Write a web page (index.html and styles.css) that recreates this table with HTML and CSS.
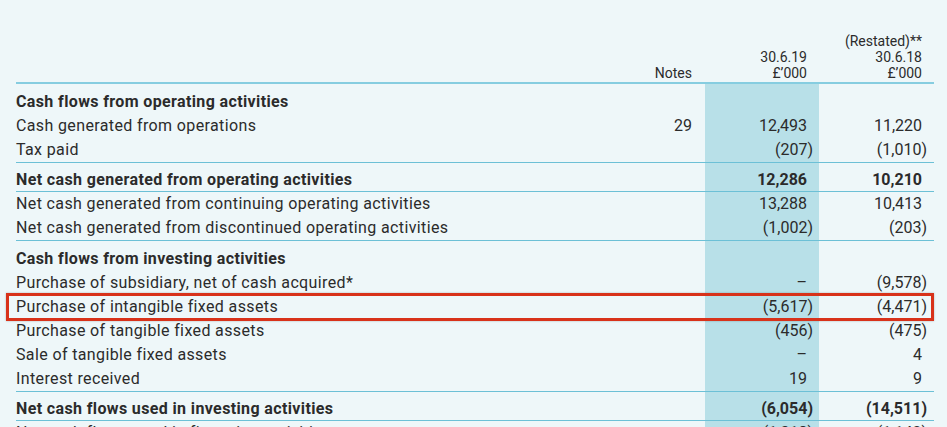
FILE: index.html
```
<!DOCTYPE html>
<html lang="en">
<head>
<meta charset="utf-8">
<title>Cash flow statement</title>
<link rel="stylesheet" href="styles.css">
</head>
<body>
<div class="sheet">
  <table class="cf">
    <colgroup>
      <col class="c-label">
      <col class="c-notes">
      <col class="c-cur">
      <col class="c-prev">
    </colgroup>
    <thead>
      <tr>
        <th class="lbl"></th>
        <th class="notes">Notes</th>
        <th class="cur">30.6.19<br>£’000</th>
        <th class="prev">(Restated)**<br>30.6.18<br>£’000</th>
      </tr>
    </thead>
    <tbody>
      <tr class="gap"><td class="lbl b">Cash flows from operating activities</td><td class="notes"></td><td class="cur"></td><td class="prev"></td></tr>
      <tr><td class="lbl">Cash generated from operations</td><td class="notes">29</td><td class="cur n">12,493</td><td class="prev n">11,220</td></tr>
      <tr class="rule"><td class="lbl">Tax paid</td><td class="notes"></td><td class="cur">(207)</td><td class="prev">(1,010)</td></tr>
      <tr class="gap rule total"><td class="lbl b">Net cash generated from operating activities</td><td class="notes"></td><td class="cur n b">12,286</td><td class="prev n b">10,210</td></tr>
      <tr><td class="lbl">Net cash generated from continuing operating activities</td><td class="notes"></td><td class="cur n">13,288</td><td class="prev n">10,413</td></tr>
      <tr class="rule"><td class="lbl">Net cash generated from discontinued operating activities</td><td class="notes"></td><td class="cur">(1,002)</td><td class="prev">(203)</td></tr>
      <tr class="gap"><td class="lbl b">Cash flows from investing activities</td><td class="notes"></td><td class="cur"></td><td class="prev"></td></tr>
      <tr><td class="lbl">Purchase of subsidiary, net of cash acquired*</td><td class="notes"></td><td class="cur n">–</td><td class="prev">(9,578)</td></tr>
      <tr><td class="lbl">Purchase of intangible fixed assets</td><td class="notes"></td><td class="cur">(5,617)</td><td class="prev">(4,471)</td></tr>
      <tr><td class="lbl">Purchase of tangible fixed assets</td><td class="notes"></td><td class="cur">(456)</td><td class="prev">(475)</td></tr>
      <tr><td class="lbl">Sale of tangible fixed assets</td><td class="notes"></td><td class="cur n">–</td><td class="prev n">4</td></tr>
      <tr class="rule"><td class="lbl">Interest received</td><td class="notes"></td><td class="cur n">19</td><td class="prev n">9</td></tr>
      <tr class="gap rule total"><td class="lbl b">Net cash flows used in investing activities</td><td class="notes"></td><td class="cur b">(6,054)</td><td class="prev b">(14,511)</td></tr>
      <tr><td class="lbl">Net cash flows used in financing activities</td><td class="notes"></td><td class="cur">(1,318)</td><td class="prev">(1,142)</td></tr>
    </tbody>
  </table>
  <div class="mark" aria-hidden="true"></div>
</div>
</body>
</html>
```
FILE: styles.css
```
html, body {
  margin: 0;
  padding: 0;
  background: #eef7f9;
}

body {
  font-family: Roboto, "Liberation Sans", Arial, sans-serif;
  color: #2b2b2b;
  overflow: hidden;
}

.sheet {
  position: relative;
  padding: 33px 13px 0 16px;
}

.cf {
  width: 918px;
  border-collapse: collapse;
  table-layout: fixed;
}

.c-label { width: 609px; }
.c-notes { width: 80px; }
.c-cur { width: 114px; }
.c-prev { width: 115px; }

.cf th {
  font-size: 14px;
  line-height: 16px;
  font-weight: 400;
  vertical-align: bottom;
  text-align: right;
  padding: 0 12px 1px 0;
  border-bottom: 2px solid #86cde0;
}

.cf th.notes { padding-right: 13px; }
.cf th.lbl { padding: 0; }

.cf td {
  font-size: 16px;
  line-height: 24px;
  height: 24px;
  padding: 0;
  white-space: nowrap;
  vertical-align: bottom;
}

.cf td.lbl { text-align: left; letter-spacing: 0.37px; }
.cf td.notes { text-align: right; padding-right: 13px; }
.cf td.cur { text-align: right; padding-right: 6px; background: #b8e0e8; }
.cf td.prev { text-align: right; padding-right: 7px; }
.cf td.cur.n { padding-right: 12px; }
.cf td.prev.n { padding-right: 12px; }

.cf tr.gap td { padding-top: 6px; }
.cf tr.total td { line-height: 22px; height: 22px; padding-top: 6px; }
.cf tr.rule td { border-bottom: 1px solid #6cc0d6; }

.b { font-weight: 700; }

.mark {
  position: absolute;
  left: 6px;
  top: 293px;
  width: 928px;
  height: 28px;
  box-sizing: border-box;
  border: 3px solid #d8321a;
  box-shadow: 0 0 2px rgba(0, 0, 0, 0.25);
}
```
